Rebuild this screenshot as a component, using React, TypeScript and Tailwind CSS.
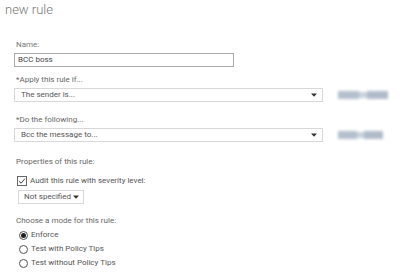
import React from "react"

const Arrow = () => (
  <svg width="6" height="4" viewBox="0 0 6 4" className="shrink-0">
    <path d="M0 0.5 L6 0.5 L3 3.8 Z" fill="#333" />
  </svg>
)

function Blurred({ w }: { w: number }) {
  // blurred address next to the selects in the original
  return (
    <div className="ml-[15px] flex h-[8px] items-center blur-[1.5px]" style={{ width: w }}>
      <div className="h-full flex-[3] bg-[#b4bfcd]" />
      <div className="h-[6px] flex-[1] bg-[#c9d1dc]" />
      <div className="h-full flex-[3] bg-[#b0bbca]" />
    </div>
  )
}

function Radio({ label, checked }: { label: string; checked?: boolean }) {
  return (
    <div className="flex h-[14px] items-center pl-[5px]">
      <span className="flex h-[9px] w-[9px] items-center justify-center rounded-full border border-[#555] bg-white">
        {checked && <span className="h-[5px] w-[5px] rounded-full bg-[#222]" />}
      </span>
      <span className="ml-[3px] text-[#555]">{label}</span>
    </div>
  )
}

export default function App() {
  return (
    <div className="h-[275px] w-[400px] overflow-hidden bg-white font-['Roboto','Open_Sans',sans-serif] text-[8px] leading-[10px]">
      <h1 className="pl-[5px] pt-[2px] text-[13px] font-light leading-[15px] text-[#777]">new rule</h1>

      <div className="pl-[14px] pt-[23px]">
        <div className="pl-[2px] text-[#777]">Name:</div>
        <div className="mt-[3px] flex h-[14px] w-[220px] items-center border border-[#aaa] px-[3px] text-[#444]">
          BCC boss
        </div>

        <div className="mt-[8px] pl-[2px] text-[#666]">*Apply this rule if...</div>
        <div className="mt-[3px] flex items-center">
          <div className="flex h-[14px] w-[309px] items-center justify-between border border-[#d8d8d8] pl-[6px] pr-[5px] text-[#555]">
            <span>The sender is...</span>
            <Arrow />
          </div>
          <Blurred w={50} />
        </div>

        <div className="mt-[13px] pl-[2px] text-[#666]">*Do the following...</div>
        <div className="mt-[3px] flex items-center">
          <div className="flex h-[14px] w-[309px] items-center justify-between border border-[#d8d8d8] pl-[6px] pr-[5px] text-[#555]">
            <span>Bcc the message to...</span>
            <Arrow />
          </div>
          <Blurred w={45} />
        </div>

        <div className="mt-[15px] pl-[2px] text-[#666]">Properties of this rule:</div>

        <div className="mt-[8px] flex h-[12px] items-center pl-[3px]">
          <span className="flex h-[10px] w-[10px] items-center justify-center border border-[#666] bg-white">
            <svg width="8" height="8" viewBox="0 0 8 8">
              <path d="M1 4.2 L3.1 6.2 L7 1.6" fill="none" stroke="#444" strokeWidth="1" />
            </svg>
          </span>
          <span className="ml-[3px] text-[#555]">Audit this rule with severity level:</span>
        </div>

        <div className="ml-[4px] mt-[3px] flex h-[14px] w-[66px] items-center justify-between border border-[#d8d8d8] pl-[5px] pr-[4px] text-[#555]">
          <span>Not specified</span>
          <Arrow />
        </div>

        <div className="mt-[12px] pl-[2px] text-[#666]">Choose a mode for this rule:</div>
        <div className="mt-[2px]">
          <Radio label="Enforce" checked />
          <Radio label="Test with Policy Tips" />
          <Radio label="Test without Policy Tips" />
        </div>
      </div>
    </div>
  )
}
